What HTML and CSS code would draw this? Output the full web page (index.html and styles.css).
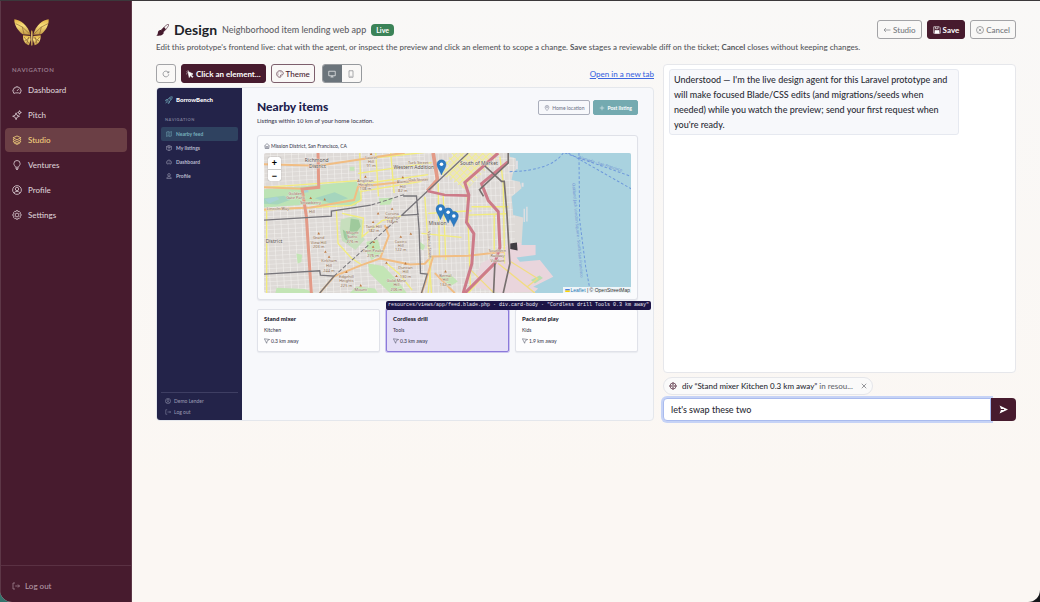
FILE: index.html
```html
<!DOCTYPE html>
<html lang="en">
<head>
<meta charset="utf-8">
<title>Design – Neighborhood item lending web app</title>
<meta name="viewport" content="width=device-width, initial-scale=1">
<link rel="stylesheet" href="styles.css">
<script src="app.js" defer></script>
</head>
<body>
<svg class="defs" aria-hidden="true">
  <symbol id="i-speed" viewBox="0 0 16 16"><path d="M3 13.5a6.5 6.5 0 1 1 10 0c-1.500-.8-3-1-5-1s-3.500.2-5 1zM8 9.500l3-3.500M8 3.500v1M3.500 9h-1M13.500 9h-1M4.500 5.500l.7.7"/></symbol>
  <symbol id="i-stars" viewBox="0 0 16 16"><path d="M6.500 4.500 8 8.500l4 1.500-4 1.500-1.500 4-1.500-4L1 10l4-1.500zM12 1l.8 2.200L15 4l-2.200.8L12 7l-.8-2.200L9 4l2.200-.8z"/></symbol>
  <symbol id="i-stack" viewBox="0 0 16 16"><path d="M8 1.500 14.500 4.500 8 7.500 1.500 4.500zM3 6.800 1.500 7.500 8 10.500l6.500-3-1.500-.7M3 9.800l-1.500.7L8 13.500l6.500-3-1.500-.7M3 12.500l5 2.700 5-2.700"/></symbol>
  <symbol id="i-bulb" viewBox="0 0 16 16"><path d="M5.500 11.500C5.500 9.500 3 8.800 3 5.800a5 5 0 0 1 10 0c0 3-2.500 3.700-2.500 5.700zM5.500 13.300h5M6.500 15.200h3"/></symbol>
  <symbol id="i-person" viewBox="0 0 16 16"><circle cx="8" cy="8" r="7"/><circle cx="8" cy="6.300" r="2.700"/><path d="M3.200 13c1-2 2.500-2.700 4.800-2.700s3.800.7 4.800 2.700"/></symbol>
  <symbol id="i-user" viewBox="0 0 16 16"><circle cx="8" cy="5" r="3.500"/><path d="M2 14.500c0-3 2-4.500 6-4.500s6 1.500 6 4.500z"/></symbol>
  <symbol id="i-gear" viewBox="0 0 16 16"><path d="M6.800 1h2.400l.6 1.700 1.700-.6 1.800 1.800-.7 1.700 1.900.9v2.800l-1.900.8.7 1.800-1.800 1.800-1.700-.7-.6 1.800H6.800l-.7-1.800-1.700.7-1.800-1.800.7-1.700-1.900-.9V6.600l1.900-.9-.7-1.800 1.800-1.800 1.700.6z"/><circle cx="8" cy="8" r="3"/></symbol>
  <symbol id="i-exit" viewBox="0 0 16 16"><path d="M6 2H2v12h4M6.500 8H15M12 5l3 3-3 3"/></symbol>
  <symbol id="i-reload" viewBox="0 0 16 16"><path d="M13.500 8.500a5.700 5.700 0 1 1-1.800-4.700l1.500 1.500M13.700 2v3.500h-3.500"/></symbol>
  <symbol id="i-palette" viewBox="0 0 16 16"><path d="M8 1.500c4 0 6.500 2.500 6.500 5.500 0 3-3 3-4.500 3s-1 1.500-.5 2.500.3 2-1.500 2C4 14.500 1.500 11.500 1.500 8S4 1.500 8 1.500z"/><path d="M5 6h.5M8 4.300h.5M11 6h.5M4.500 9.500H5" stroke-width="2"/></symbol>
  <symbol id="i-left" viewBox="0 0 16 16"><path d="M15 8H2M6 4 2 8l4 4"/></symbol>
  <symbol id="i-xcircle" viewBox="0 0 16 16"><circle cx="8" cy="8" r="7"/><path d="m5.500 5.500 5 5m0-5-5 5"/></symbol>
  <symbol id="i-x" viewBox="0 0 16 16"><path d="m2 2 12 12M14 2 2 14"/></symbol>
  <symbol id="i-target" viewBox="0 0 16 16"><circle cx="8" cy="8" r="6"/><circle cx="8" cy="8" r="2.500"/><path d="M8 0v5M8 11v5M0 8h5M11 8h5"/></symbol>
  <symbol id="i-monitor" viewBox="0 0 16 16"><path d="M1.500 2.500h13v9h-13zM8 11.500v2.500M5 14h6"/></symbol>
  <symbol id="i-phone" viewBox="0 0 16 16"><path d="M4 1.500h8v13H4zM7 12.500h2"/></symbol>
  <symbol id="i-rocket" viewBox="0 0 16 16"><path d="M14.500 1.500C10 1.500 7 4 5 8l3 3c4-2 6.500-5 6.500-9.500zM5.500 7H2.500L1 9.500l4 .5M9 10.500v3L6.500 15 6 11M4 11l-2.500 3.500"/><circle cx="10.500" cy="5.500" r="1.300"/></symbol>
  <symbol id="i-map" viewBox="0 0 16 16"><path d="m1 3 4.700-1.500L10.300 3 15 1.500v11.500l-4.700 1.500L5.700 13 1 14.500zM5.700 1.500V13M10.300 3v11.500"/></symbol>
  <symbol id="i-box" viewBox="0 0 16 16"><path d="m8 1 6.500 3v8L8 15l-6.500-3V4zM1.500 4 8 7.500 14.500 4M8 7.500V15M5 2.500 11.500 6"/></symbol>
  <symbol id="i-home" viewBox="0 0 16 16"><path d="M1 8 8 1.500 15 8M3 6.500v8h10v-8M6 14V9.500h4V14"/></symbol>
  <symbol id="i-pin" viewBox="0 0 16 16"><path d="M8 15C5 11.500 3 9 3 6a5 5 0 0 1 10 0c0 3-2 5.500-5 9z"/><circle cx="8" cy="6" r="2"/></symbol>
  <symbol id="i-plus" viewBox="0 0 16 16"><path d="M8 2v12M2 8h12"/></symbol>
  <symbol id="i-signpost" viewBox="0 0 16 16"><path d="M1 2l14 2-6 3-2 7z"/></symbol>
  <symbol id="i-marker" viewBox="0 0 25 41"><path d="M12.500 40C11 33 1 21 1 12.500a11.500 11.500 0 0 1 23 0C24 21 14 33 12.500 40z" fill="#2e7cc3" stroke="#1f66a8"/><circle cx="12.500" cy="12.500" r="4.500" fill="#fff" stroke="none"/></symbol>
</svg>

<div class="app">
  <aside class="sidebar">
    <a class="logo" href="#" aria-label="Home">
      <svg viewBox="0 0 105 81">
        <defs><linearGradient id="gold" x1="0" y1="0" x2="0" y2="1"><stop offset="0" stop-color="#e0b142"/><stop offset=".4" stop-color="#f8dd7b"/><stop offset="1" stop-color="#c39a45"/></linearGradient></defs>
        <g fill="url(#gold)">
          <path d="M1 1C18 3 42 18 49 47L26 46C12 36 0 18 1 1z"/>
          <path d="M104 1C87 3 65 18 58 47l23-1C95 36 105 18 104 1z"/>
          <path d="M27 49l22 2 1 12-5 16C34 76 26 66 27 49z"/>
          <path d="M80 49l-22 2-1 12 5 16C73 76 81 66 80 49z"/>
          <path d="M53.500 33l2 5v40l-2 3-2-3V38z"/>
        </g>
        <path class="veins" d="M5 14l20 10 22 21M25 24l5 21M102 14L82 24 60 45M82 24l-5 21M30 54l16 20M31 66l16-10M38 74l6-20M77 54L61 74M76 66L60 56M69 74l-6-20"/>
      </svg>
    </a>
    <p class="nav-label">NAVIGATION</p>
    <nav class="nav">
      <a href="#"><svg class="icon"><use href="#i-speed"/></svg>Dashboard</a>
      <a href="#"><svg class="icon"><use href="#i-stars"/></svg>Pitch</a>
      <a href="#" class="active" aria-current="page"><svg class="icon"><use href="#i-stack"/></svg>Studio</a>
      <a href="#"><svg class="icon"><use href="#i-bulb"/></svg>Ventures</a>
      <a href="#"><svg class="icon"><use href="#i-person"/></svg>Profile</a>
      <a href="#"><svg class="icon"><use href="#i-gear"/></svg>Settings</a>
    </nav>
    <div class="side-foot"><button type="button"><svg class="icon small"><use href="#i-exit"/></svg>Log out</button></div>
  </aside>

  <main class="main">
    <header class="head">
      <div class="heading">
        <svg class="brush" viewBox="0 0 39 36"><path d="M38 1c2 2-7 15-15 22l-6-6C24 9 35-1 38 1z" fill="none" stroke="#451a2d" stroke-width="2"/><path d="M24 9l6 7-8 8-6-6z" fill="#451a2d"/><path d="M15 18c4 0 8 4 8 8 0 7-11 10-22 9 5-3 4-7 5-11 1-4 5-6 9-6z" fill="#451a2d"/></svg>
        <h1>Design</h1>
        <span class="project">Neighborhood item lending web app</span>
        <span class="badge">Live</span>
      </div>
      <div class="actions">
        <button type="button" class="btn gray"><svg class="icon small"><use href="#i-left"/></svg>Studio</button>
        <button type="button" class="btn solid"><svg class="icon small" viewBox="0 0 16 16"><path d="M1.500 1.500h11l2 2v11h-13z"/><path d="M4 9h8v5.500H4z" fill="currentColor"/><path d="M5 2v3.500h5V2"/></svg>Save</button>
        <button type="button" class="btn gray"><svg class="icon small"><use href="#i-xcircle"/></svg>Cancel</button>
      </div>
    </header>
    <p class="intro">Edit this prototype's frontend live: chat with the agent, or inspect the preview and click an element to scope a change. <b>Save</b> stages a reviewable diff on the ticket; <b>Cancel</b> closes without keeping changes.</p>

    <div class="workspace">
      <section class="stage">
        <div class="toolbar">
          <button type="button" class="btn gray square" aria-label="Reload"><svg class="icon small"><use href="#i-reload"/></svg></button>
          <button type="button" class="btn solid"><svg class="icon small" viewBox="0 0 16 16"><path d="M4 3l10 5-4 1.500 4 4-1.500 1.500-4-4L6.500 15z" fill="currentColor"/><path d="M1 3.500l2 1M4 .5l.5 2M.5 8l2-1"/></svg>Click an element...</button>
          <button type="button" class="btn wine"><svg class="icon small"><use href="#i-palette"/></svg>Theme</button>
          <div class="devices">
            <button type="button" class="on" aria-label="Desktop"><svg class="icon small"><use href="#i-monitor"/></svg></button>
            <button type="button" aria-label="Phone"><svg class="icon small"><use href="#i-phone"/></svg></button>
          </div>
          <a class="newtab" href="#">Open in a new tab</a>
        </div>

        <div class="preview">
          <aside class="p-side">
            <div class="p-brand"><svg class="icon small"><use href="#i-rocket"/></svg>BorrowBench</div>
            <p class="p-label">NAVIGATION</p>
            <nav class="p-nav">
              <a href="#" class="active"><svg class="icon tiny"><use href="#i-map"/></svg>Nearby feed</a>
              <a href="#"><svg class="icon tiny"><use href="#i-box"/></svg>My listings</a>
              <a href="#"><svg class="icon tiny"><use href="#i-speed"/></svg>Dashboard</a>
              <a href="#"><svg class="icon tiny"><use href="#i-user"/></svg>Profile</a>
            </nav>
            <div class="p-foot">
              <a href="#"><svg class="icon tiny"><use href="#i-person"/></svg>Demo Lender</a>
              <a href="#"><svg class="icon tiny"><use href="#i-exit"/></svg>Log out</a>
            </div>
          </aside>
          <div class="p-main">
            <div class="p-head">
              <div><h2>Nearby items</h2><p>Listings within 10 km of your home location.</p></div>
              <div class="p-actions">
                <button type="button" class="p-btn"><svg class="icon tiny"><use href="#i-pin"/></svg>Home location</button>
                <button type="button" class="p-btn teal"><svg class="icon tiny"><use href="#i-plus"/></svg>Post listing</button>
              </div>
            </div>
            <div class="map-card">
              <p class="place"><svg class="icon tiny"><use href="#i-home"/></svg>Mission District, San Francisco, CA</p>
              <div class="map">
                <svg class="tiles" viewBox="28 69 1100 420" preserveAspectRatio="xMidYMid slice" role="img" aria-label="Map of San Francisco">
                  <defs>
                    <pattern id="grid" width="21" height="13" patternUnits="userSpaceOnUse" patternTransform="rotate(-3)"><path d="M0 0h21M0 0v13" stroke="#f4f2f0" stroke-width="3"/></pattern>
                    <pattern id="grid2" width="14" height="22" patternUnits="userSpaceOnUse" patternTransform="rotate(-2)"><path d="M0 0h14M0 0v22" stroke="#f4f2f0" stroke-width="3"/></pattern>
                    <pattern id="market" width="16" height="14" patternUnits="userSpaceOnUse" patternTransform="rotate(-45)"><path d="M0 0h16M0 0v14" stroke="#f2ef8c" stroke-width="5"/></pattern>
                  </defs>
                  <path fill="#dedad7" d="M28 69h1100v420H28z"/>
                  <path fill="url(#grid)" d="M28 69h480v420H28z"/>
                  <path fill="url(#grid2)" d="M490 69h290v420H490z"/>
                  <path fill="#e8e1c9" d="M600 69h125L632 170l-60-40z"/>
                  <path fill="url(#market)" d="M590 69h150L634 180 556 130z"/>
                  <path fill="#e9d5dc" d="M740 489l-90-20 30-70 60-30 20-30h90l60 95-60 50z"/>
                  <path fill="#bce3b5" d="M28 178l120-9 158-15 14 50-18 22-154-2-120 8z"/>
                  <path fill="#a5d5bd" d="M28 205l60-8 20 12-40 14-40-2zM180 205l60-18 40 18-50 15z"/>
                  <path fill="#a8d2d4" d="M30 208l36-8 8 8-30 12zM142 180l18 0 2 7-20 2z"/>
                  <path fill="#c7dfbd" d="M258 268l40-10 28 14-6 40 10 16-28 32-40-28-6-34z"/>
                  <path fill="#9fca9c" d="M288 265l24 4 6 20-22 30-12-12zM264 298l14 10 6 36-16-22z"/>
                  <path fill="#c3e5b5" d="M340 400l46 8 46 48 24 33h-50l-62-60zM66 473l84 4 30 12H62zM285 489l20-20 56 6 8 14zM372 205l44-2-10 20-30 2zM285 110h14v12h-14zM335 335l34-7 12 40-30 22-14-20zM495 335l16 12-6 14-12-8zM125 370l17 4-2 22-11 4zM555 440l30-8 24 22-22 14z"/>
                  <g fill="none" stroke="#f2ec7d" stroke-width="4">
                    <path d="M28 172l282-20M28 240l262-14 30-16M315 69l4 142M363 69l8 130M408 69l10 120M300 90l240-26M310 130l220-32M320 162l200-28M320 184l180-30M245 240l5 100 40 44 30 20M262 250l64 14-4 56 60-48 56-14M36 240v249M510 200l20 289M520 250l130-8M550 160l4 220M565 190l8 200M500 310l120 12M637 190l10 290M650 230h110M635 255l120-4M718 250v120M520 489l10-110M396 400l36 30 40 50M735 80l10 80M745 160l4 240M640 489l80-90"/>
                  </g>
                  <g fill="none" stroke="#f1bd83" stroke-width="6">
                    <path d="M28 103l162 4 110-16 150-23M28 238l140-6 130-22 12-40 210-22M28 172l114 4M390 285l12 32-26 68-56 20-82 34-43 50M376 385l90 18 44-2 20-22 110-2 108-12M534 382l-24 80-10 27M600 489l-60-60"/>
                  </g>
                  <path fill="none" stroke="#e39a87" stroke-width="9" d="M190 69l2 103-50 5 13 82 7 110 8 120"/>
                  <path fill="none" stroke="#e39a87" stroke-width="11" d="M535 69l13 80-30 34"/>
                  <g fill="none" stroke="#77757a" stroke-width="4">
                    <path d="M28 270l202-12v-15l118-18M28 432l167-10 2 13 41 3-43 51M440 256l200-187M445 198h40l8 102 4 130 20 2-17 57M440 256l52-3"/>
                    <path stroke-dasharray="12 6" stroke-width="3" d="M238 438l202-182M350 225l100-32"/>
                  </g>
                  <!-- Bay and shoreline -->
                  <path fill="#a9d2df" d="M763 69h365v420H835l15-14-15-5 60-30-40-50-60 5-10-13 57-7v-30h-42l5-83-30-7-5-55 30-25-5-20-25-5 5-25 8-5V85l-18-5z"/>
                  <path fill="#e2dfe2" d="M814 230h4v44h-4zM806 236h4v40h-4zM783 92h6v26h-6zM800 158h6v12h-6z"/>
                  <path fill="#b8dfb0" d="M828 450l26-14 10 8-24 16z"/>
                  <g fill="none" stroke="#f1dc83" stroke-width="4"><path d="M768 395l80 50-30 24M730 400l110 89M648 420l70 69"/></g>
                  <g fill="none" stroke="#cd7b89" stroke-width="9">
                    <path d="M730 69l-100 88 12 38-7 82 22 34-6 90-26 88"/>
                    <path d="M760 95l-80 66 20 50 30 34 5 106-15 48-90 90"/>
                    <path d="M518 183l52 12 72 2" stroke-width="8"/>
                  </g>
                  <g fill="none" stroke="#77706f" stroke-width="5"><path d="M760 69v30l-86 80 12 20M690 108l50 46h8l8 96 9 150-20 89M720 400l-4 89"/></g>
                  <path fill="#3f3d42" d="M766 340l20-3 2 24-22-4z"/>
                  <g fill="none" stroke="#6d98db" stroke-width="3" stroke-dasharray="8 6"><path d="M925 69q-38 54-165 56M972 69l2 200 18 140 15 80M930 69l198 70M940 69l188 107"/></g>
                  <g class="water-text"><text transform="translate(970 85) rotate(17)">Alameda - San Francisco</text><text transform="translate(952 160) rotate(85)">Oakland Jack London Square - South San Francisco</text></g>
                  <g class="map-text" text-anchor="middle">
                    <text x="186" y="97">Richmond</text><text x="188" y="115">District</text><text x="477" y="116">Western Addition</text><text x="672" y="104">South of Market</text><text x="548" y="284">Mission</text><text x="58" y="338">District</text>
                  </g>
                  <g class="map-text hill" text-anchor="middle">
                    <text x="349" y="88">Laurel</text><text x="349" y="100">Hill</text><text x="349" y="112">91 m</text>
                    <text x="332" y="157">Anglican</text><text x="332" y="169">Heights</text><text x="332" y="181">108 m</text>
                    <text x="122" y="194">Golden</text><text x="122" y="208">Gate Park</text><text x="168" y="221">Strawberry</text><text x="172" y="248">Hill</text>
                    <text x="192" y="327">Grand</text><text x="192" y="341">View Hill</text><text x="192" y="355">203 m</text>
                    <text x="223" y="397">Kirkham</text><text x="223" y="411">Hill</text><text x="223" y="425">244 m</text>
                    <text x="412" y="254">Corona</text><text x="412" y="267">Heights</text><text x="412" y="280">158 m</text>
                    <text x="357" y="293">Tank Hill</text><text x="357" y="306">182 m</text>
                    <text x="293" y="311">Mount</text><text x="293" y="325">Sutro</text><text x="293" y="338">276 m</text>
                    <text x="355" y="367">Twin Peaks</text><text x="355" y="381">276 m</text>
                    <text x="438" y="338">Castro</text><text x="438" y="351">Hill</text><text x="438" y="364">122 m</text>
                    <text x="452" y="416">Duncan</text><text x="452" y="429">Hill</text><text x="452" y="443">130 m</text>
                    <text x="275" y="443">Edgehill</text><text x="275" y="456">Heights</text><text x="275" y="470">225 m</text><text x="318" y="482">Mount</text>
                    <text x="425" y="455">Gold Mine</text><text x="425" y="469">Hill</text><text x="425" y="483">206 m</text><text x="572" y="441">Bernal</text><text x="572" y="454">Hill</text><text x="572" y="467">132 m</text>
                    <text x="444" y="160">Alamo</text><text x="444" y="173">Hill</text><text x="444" y="185">82 m</text><text x="490" y="102">Turk Street</text><text x="490" y="152">Oak Street</text><text x="70" y="241">Lincoln Way</text>
                    <text x="728" y="367">Southern</text><text x="728" y="381">Railway</text><text x="728" y="396">Viaduct</text>
                    <text transform="translate(520 345) rotate(87)">Valencia Street</text>
                  </g>
                  <path fill="#bd7b44" d="M192 306l4 7h-8zM212 361l4 7h-8zM223 376l4 7h-8zM275 422l4 7h-8zM318 462l4 7h-8zM355 272l4 7h-8zM397 288l4 7h-8zM357 332l4 7h-8zM355 346l4 7h-8zM438 316l4 7h-8zM468 307l4 7h-8zM452 396l4 7h-8zM395 394l4 7h-8zM425 434l4 7h-8zM370 246l4 7h-8zM412 232l4 7h-8zM444 138l4 7h-8zM332 136l4 7h-8zM349 68l4 7h-8zM168 200l4 7h-8zM210 204l4 7h-8zM572 420l4 7h-8z"/>
                  <use href="#i-marker" x="543" y="88" width="34" height="48"/>
                  <use href="#i-marker" x="540" y="222" width="34" height="48"/>
                  <use href="#i-marker" x="563" y="232" width="34" height="48"/>
                  <use href="#i-marker" x="580" y="243" width="34" height="48"/>
                </svg>
                <div class="zoom"><button type="button" aria-label="Zoom in">+</button><button type="button" aria-label="Zoom out">−</button></div>
                <div class="credit"><svg viewBox="0 0 12 8"><path fill="#4c7be1" d="M0 0h12v4H0z"/><path fill="#ffd500" d="M0 4h12v4H0z"/></svg><a href="#">Leaflet</a> | © OpenStreetMap</div>
              </div>
            </div>
            <div class="cards">
              <article><h3>Stand mixer</h3><p>Kitchen</p><p class="dist"><svg class="icon tiny"><use href="#i-signpost"/></svg>0.3 km away</p></article>
              <article class="picked"><span class="tag">resources/views/app/feed.blade.php · div.card-body · "Cordless drill Tools 0.3 km away"</span><h3>Cordless drill</h3><p>Tools</p><p class="dist"><svg class="icon tiny"><use href="#i-signpost"/></svg>0.3 km away</p></article>
              <article><h3>Pack and play</h3><p>Kids</p><p class="dist"><svg class="icon tiny"><use href="#i-signpost"/></svg>1.9 km away</p></article>
            </div>
          </div>
        </div>
      </section>

      <section class="chat">
        <div class="log"><p class="bubble">Understood — I'm the live design agent for this Laravel prototype and<br>will make focused Blade/CSS edits (and migrations/seeds when<br>needed) while you watch the preview; send your first request when<br>you're ready.</p></div>
        <div class="chip"><svg class="icon small target"><use href="#i-target"/></svg><span class="chip-text">div “Stand mixer Kitchen 0.3 km away” <span>in resou...</span></span><button type="button" aria-label="Remove"><svg class="icon tiny"><use href="#i-x"/></svg></button></div>
        <form class="composer">
          <input type="text" id="message" aria-label="Message" value="let's swap these two" autofocus>
          <button type="button" aria-label="Send"><svg viewBox="0 0 16 16"><path d="M1 1l15 7-15 7 2.500-6H9V7H3.500z" fill="#fff"/></svg></button>
        </form>
      </section>
    </div>
  </main>
</div>
</body>
</html>
```
FILE: app.js
```js
// Keep the caret at the end of the drafted message.
const message = document.getElementById("message");
message.focus();
message.setSelectionRange(message.value.length, message.value.length);
```
FILE: styles.css
```css
* { box-sizing: border-box; }
body {
  margin: 0;
  font: 500 8px/12px Lato, "Open Sans", sans-serif;
  color: #2b2d36;
  background: linear-gradient(90deg, #34736c 50%, #15171a 50%);
}
h1, h2, h3, p { margin: 0; }
a { color: inherit; text-decoration: none; }
button { font: inherit; color: inherit; background: none; border: 0; padding: 0; cursor: pointer; }
.defs { position: absolute; width: 0; height: 0; }
.icon { width: 10px; height: 10px; flex: none; fill: none; stroke: currentColor; stroke-width: 1.3; }
.icon.small { width: 8px; height: 8px; }
.icon.tiny { width: 6px; height: 6px; }

.app {
  display: flex;
  min-height: 100vh;
  border-top: 1px solid #3b383b;
  border-radius: 0 0 12px 12px;
  overflow: hidden;
  background: linear-gradient(#f9f8f7, #fbf7f3 80%);
}

/* Sidebar */
.sidebar {
  flex: none;
  width: 132px;
  display: flex;
  flex-direction: column;
  background: #471b2e;
  border-left: 1px solid #5d3747;
  border-right: 1px solid #5d3747;
  color: #dccfd5;
}
.logo { margin: 18px 0 0 13px; width: 35px; }
.logo svg { display: block; width: 100%; }
.veins { fill: none; stroke: #8a6234; stroke-width: 2; }
.nav-label { margin: 18px 0 2px 11px; font-size: 6px; font-weight: 700; letter-spacing: 0.5px; color: #96798a; }
.nav { display: grid; gap: 1px; padding: 0 4px; }
.nav a { display: flex; align-items: center; gap: 6px; height: 24px; padding-left: 7px; border-radius: 4px; }
.nav .active { background: #6b3f45; color: #f2cf7d; }
.side-foot { margin-top: auto; border-top: 1px solid #5a3143; padding: 14px 11px 10px; color: #b399a6; }
.side-foot button { display: flex; align-items: center; gap: 5px; }

/* Header */
.main { flex: 1; min-width: 0; padding: 19px 24px 20px; }
.head { display: flex; justify-content: space-between; align-items: center; }
.heading { display: flex; align-items: center; gap: 5px; }
.brush { width: 13px; height: 12px; }
h1 { font-size: 14px; line-height: 18px; color: #202228; }
.project { font-size: 9px; color: #5f6166; }
.badge { background: #3b8358; color: #fff; font-size: 7px; font-weight: 700; padding: 0 5px; border-radius: 4px; }
.actions { display: flex; gap: 5px; }
.btn { display: flex; align-items: center; justify-content: center; gap: 2px; height: 19px; padding: 0 5px; border: 1px solid; border-radius: 3px; white-space: nowrap; }
.gray { color: #74777c; border-color: #a3a3a6; }
.wine { color: #471b2e; border-color: #7d5f6c; }
.solid { color: #fff; background: #471b2e; border-color: #471b2e; font-weight: 700; }
.square { width: 20px; padding: 0; }
.toolbar .btn { padding: 0 4px; }
.intro { margin-top: 2px; color: #55575c; }

/* Workspace */
.workspace { display: grid; grid-template-columns: 498fr 353fr; gap: 9px; margin-top: 11px; }
.stage, .chat { display: flex; flex-direction: column; min-width: 0; }
.toolbar { display: flex; align-items: center; gap: 5px; }
.devices { display: flex; margin-left: 2px; border: 1px solid #96999d; border-radius: 3px; overflow: hidden; color: #7b7e83; }
.devices button { display: grid; place-items: center; width: 19px; height: 17px; }
.devices .on { background: #6b747b; color: #fff; }
.newtab { margin-left: auto; color: #3d67e0; text-decoration: underline; }

/* Prototype preview */
.preview { flex: 1; display: flex; margin-top: 4px; border: 1px solid #e4e7ec; border-radius: 4px; overflow: hidden; background: #f7f8fb; font-size: 5px; line-height: 8px; min-height: 334px; }
.p-side { flex: none; width: 85px; display: flex; flex-direction: column; padding: 8px 4px 4px; background: #232349; color: #b8b9cc; font-weight: 700; }
.p-brand { display: flex; align-items: center; gap: 3px; padding-left: 4px; color: #fff; font-size: 6px; font-weight: 900; }
.p-brand .icon { color: #78b7c4; }
.p-label { padding: 12px 0 3px 4px; font-size: 4px; letter-spacing: 0.5px; color: #7c7d98; }
.p-nav { display: grid; gap: 0; }
.p-nav a { display: flex; align-items: center; gap: 4px; height: 14px; padding-left: 5px; border-radius: 2px; }
.p-nav .active { background: #2f4260; color: #78b0bd; }
.p-foot { margin-top: auto; display: grid; gap: 3px; border-top: 1px solid #3e3e63; padding: 4px 4px 0; font-weight: 500; color: #9495ae; }
.p-foot a { display: flex; align-items: center; gap: 3px; }
.p-main { flex: 1; min-width: 0; padding: 11px 15px; color: #3d4052; }
.p-head { display: flex; justify-content: space-between; align-items: start; }
h2 { font-size: 12px; line-height: 16px; font-weight: 900; color: #20204c; }
.p-head p { margin-top: 2px; font-size: 6px; }
.p-actions { display: flex; gap: 3px; margin-top: 1px; }
.p-btn { display: flex; align-items: center; gap: 2px; height: 15px; padding: 0 5px; border: 1px solid #aaaebb; border-radius: 2px; color: #72768a; }
.teal { background: #74aab0; border-color: #74aab0; color: #fff; font-weight: 700; }
.map-card { margin-top: 10px; padding: 6px; border: 1px solid #dfe1e8; border-radius: 3px; background: #fafbfd; box-shadow: 0 1px 1px #e6e8ee; }
.place { display: flex; align-items: center; gap: 1px; margin-bottom: 3px; }
.map { position: relative; border-radius: 2px; overflow: hidden; }
.tiles { display: block; width: 100%; }
.map-text { font: 15px "Noto Sans", sans-serif; fill: #55504f; stroke: #eeeae6; stroke-width: 2px; paint-order: stroke; }
.hill { font-size: 12px; fill: #88664a; }
.water-text { font: 12px "Noto Sans", sans-serif; fill: #6d8fd3; }
.zoom { position: absolute; top: 4px; left: 4px; display: grid; width: 13px; background: #fff; border-radius: 2px; box-shadow: 0 0 1px #666; }
.zoom button { height: 12px; font: 700 9px/12px "Liberation Sans", sans-serif; color: #000; }
.zoom button + button { border-top: 1px solid #ccc; }
.credit { position: absolute; right: 0; bottom: 0; padding: 0 1px 0 2px; background: #f4f8faee; font: 5px/6px "Liberation Sans", sans-serif; color: #333; }
.credit svg { width: 5px; height: 3px; margin-right: 1px; vertical-align: 0; }
.credit a { color: #1d78b5; }
.cards { display: grid; grid-template-columns: repeat(3, 1fr); gap: 6px; margin-top: 9px; }
.cards article { position: relative; padding: 5px 6px 6px; border: 1px solid #e0e2e9; border-radius: 2px; background: #fdfdfe; box-shadow: 0 1px 1px #e8eaef; }
.cards h3 { font-size: 6px; line-height: 8px; font-weight: 900; color: #23232f; }
.cards p { margin-top: 3px; }
.cards .dist { display: flex; align-items: center; gap: 1px; }
.cards .picked { background: #e5dff7; border-color: #8b79db; box-shadow: 0 0 0 1px #8b79db66; }
.tag { position: absolute; z-index: 1; left: -1px; bottom: 100%; padding: 0 2px; border-radius: 2px; background: #1d1546; color: #eeecf8; font: 5px/9px "Liberation Mono", monospace; white-space: nowrap; }

/* Chat */
.log { flex: 1; padding: 4px 5px; border: 1px solid #e6e7eb; border-radius: 4px; background: #fff; }
.bubble { width: 85%; padding: 2px 4px; border: 1px solid #e6e9f0; border-radius: 3px; background: #f7f8fb; font-size: 9px; line-height: 15px; }
.chip { align-self: flex-start; display: flex; align-items: center; height: 18px; margin-top: 4px; padding: 0 5px; gap: 5px; border: 1px solid #e5e6ea; border-radius: 9px; background: #fafafa; white-space: nowrap; }
.chip-text span { color: #66696e; }
.target { color: #471b2e; }
.chip button { margin-left: 3px; line-height: 6px; }
.composer { display: flex; margin-top: 3px; height: 23px; }
.composer input { flex: 1; min-width: 0; padding: 0 7px; border: 1px solid #a9bbee; border-radius: 4px 0 0 4px; outline: 0; box-shadow: 0 0 0 2px #c6d3f6; background: #fff; font: inherit; font-size: 9px; color: inherit; }
.composer button { display: grid; place-items: center; width: 25px; background: #471b2e; border-radius: 0 4px 4px 0; }
.composer button svg { width: 9px; height: 9px; }
```
